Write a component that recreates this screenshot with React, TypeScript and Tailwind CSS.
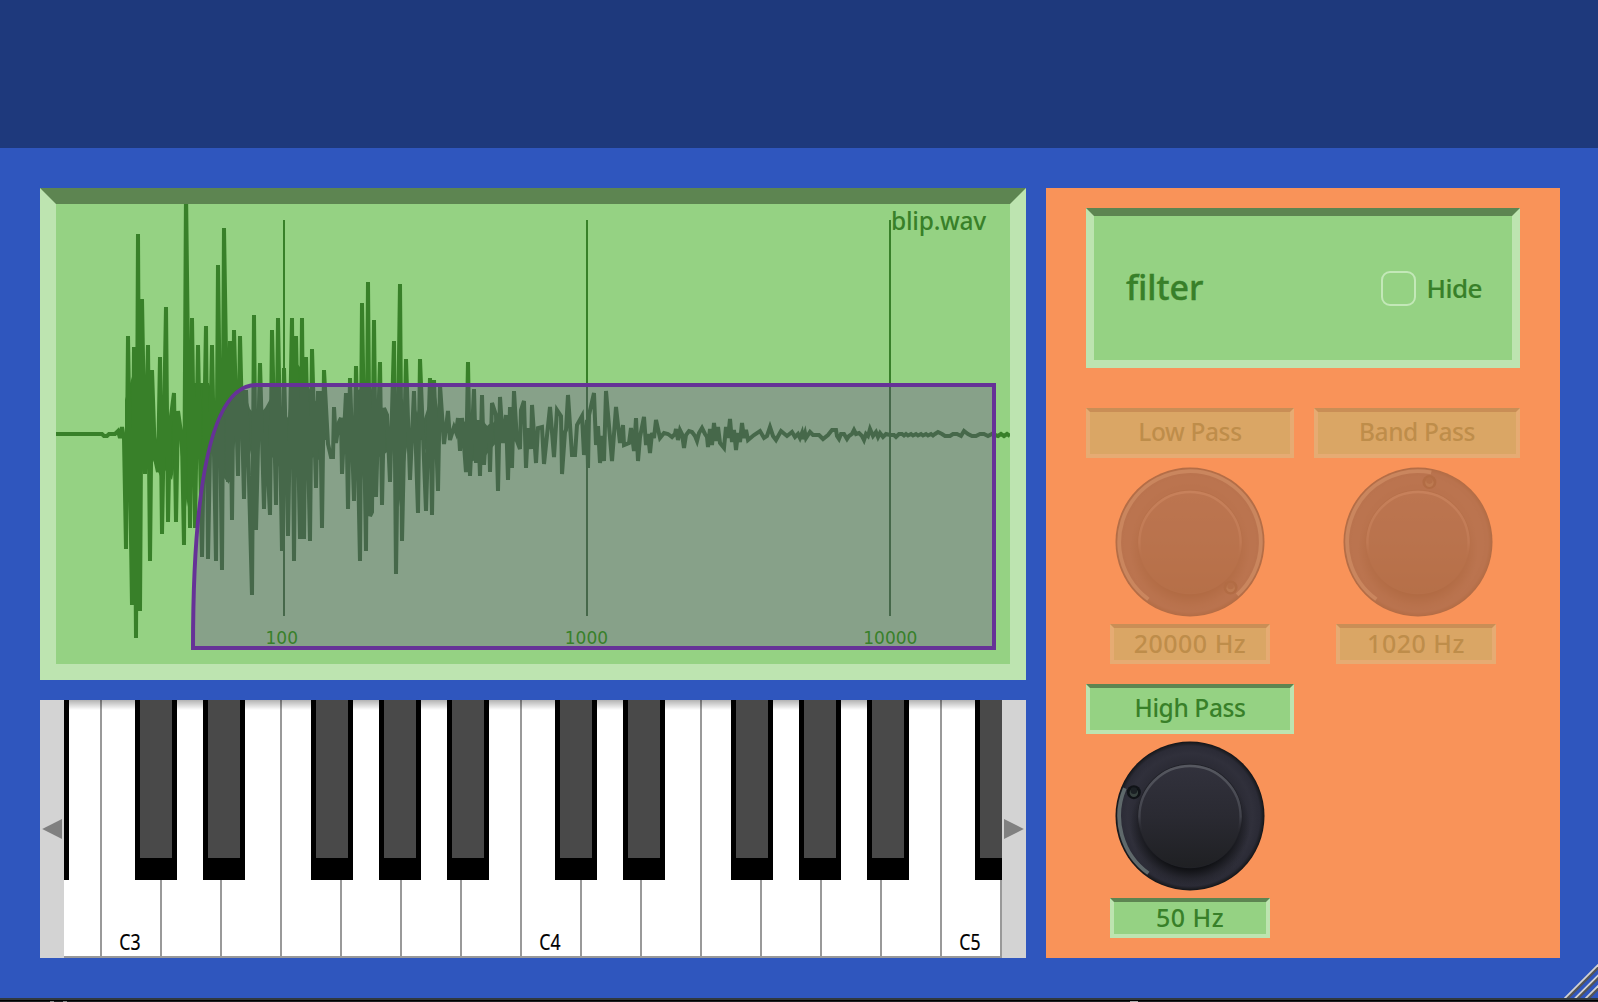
import type { ReactNode } from "react";

const WAVE =
  "56,434 102,434 104,436 107,436 109,434 115,434 118,431 120,438 122,427 124,439 126,549 128,336 132,605 134,347 136,638 138,234 140,611 142,299 145,474 148,345 150,561 152,370 155,458 158,472 160,357 162,534 166,307 168,522 170,424 174,393 176,522 178,411 182,440 184,545 186,190 190,528 192,318 195,528 198,345 202,557 206,326 208,559 212,345 216,561 218,265 222,570 224,228 228,482 230,341 232,520 234,330 238,476 240,336 244,499 246,390 248,443 252,595 254,315 256,530 260,363 264,509 266,430 270,515 272,330 276,505 278,318 282,551 284,368 288,536 292,318 294,561 296,336 300,539 302,318 304,539 306,357 310,541 312,349 316,488 318,393 320,393 322,528 324,370 328,444 331,457 333,457 334,407 336,443 339,422 341,418 342,474 346,393 348,509 350,378 354,501 356,366 360,561 362,303 366,551 368,282 370,516 372,512 374,320 376,497 380,362 382,505 384,408 387,415 390,482 394,341 396,574 400,284 402,541 406,359 410,480 414,391 418,513 420,359 426,511 430,378 432,515 434,380 438,491 440,385 444,444 448,411 450,440 454,427 456,432 458,418 460,451 462,418 466,472 468,362 470,476 474,389 476,463 478,420 480,476 482,395 484,465 486,430 489,427 490,472 492,403 496,415 498,491 500,397 503,443 506,415 508,480 510,407 512,468 514,391 517,441 520,449 521,410 524,401 526,468 528,428 531,449 532,405 536,463 538,428 542,427 544,464 550,407 554,457 557,410 561,416 562,474 565,432 566,430 568,395 572,455 575,455 577,425 582,416 584,455 587,420 588,468 589,415 594,393 596,445 598,426 600,463 602,436 604,461 606,391 612,461 616,407 620,443 623,425 624,445 629,443 631,428 634,451 636,418 638,461 640,437 644,417 646,445 648,434 650,453 652,433 654,438 656,420 660,438 664,433 668,434 672,437 675,434 676,429 678,440 680,430 682,434 684,448 686,435 689,431 692,432 695,436 697,441 699,433 702,428 705,434 707,437 708,447 710,429 712,445 714,423 716,441 718,427 720,443 724,448 726,427 728,438 730,419 732,442 734,430 736,450 738,433 740,442 742,423 744,438 746,430 748,440 754,435 760,431 764,438 767,436 770,427 773,436 776,440 781,431 787,436 792,432 795,437 798,434 800,438 802,433 803,439 805,433 806,438 810,432 813,435 819,435 823,439 828,435 832,430 836,430 837,436 839,439 841,434 844,434 847,439 849,436 852,434 854,430 856,434 859,433 862,436 864,440 866,434 868,436 870,429 873,436 876,432 878,437 880,433 883,437 886,434 890,435 894,435 896,437 899,434 902,434 904,435.5 906,434 908,435.5 911,434 913,435.5 916,434 918,435.5 921,434 923,435.5 926,434 928,435.5 931,434 933,435.5 935,434 938,432 942,434 945,436 950,436 953,434 957,434 961,436 964,431 968,434 972,436 976,436 980,434 984,434 988,436 992,434 998,436 1001,434 1004,436 1007,434 1010,436";

// Solid middle of the waveform, where neighbouring peaks merge into one mass.
const CORE = [
  "125,400 131,380 137,360 140,380 146,397 151,420 157,440 163,415 169,425 172,415 180,432 184,430 189,387 194,383 202,383 209,383 215,402 222,363 228,387 232,370 238,383 244,390 250,409 257,417 265,408 275,390 282,408 288,418 294,360 300,367 304,370 309,387 314,400 322,405 327,440 327,440 325,440 319,460 313,457 307,467 302,520 297,453 291,453 285,480 279,467 273,457 267,463 260,432 254,470 248,440 244,436 240,433 235,443 229,484 224,478 219,467 211,453 204,490 199,453 192,480 187,507 179,440 172,480 165,470 160,476 153,460 147,440 142,474 136,600 131,590 128,473 125,460",
  "340,421 347,412 354,416 358,390 365,387 371,387 377,405 382,415 388,430 389,450 392,440 397,390 403,400 410,430 417,410 422,425 430,400 436,397 441,425 441,440 435,450 429,460 422,440 414,440 407,447 399,507 392,447 386,453 379,457 376,480 371,512 363,480 356,440 351,452 345,437 340,437",
  "458,424 464,422 471,416 477,420 484,422 489,428 497,418 505,420 512,416 516,428 516,440 508,448 503,434 497,442 490,450 484,458 476,460 470,462 464,444 458,442",
];

const FILTER_CURVE = "M193 648 Q193 385 256 385 H994 V648 Z";

const TICKS = [
  { x: 284, label: "100", start: 265.5 },
  { x: 587, label: "1000", start: 564.8 },
  { x: 890, label: "10000", start: 863.3 },
];

function WavePanel() {
  return (
    <div className="relative h-[492px] border-16 border-[#bde4b0] border-t-[#5d8551] bg-[#95d283]">
      <svg className="block h-[460px] w-[954px]" viewBox="56 204 954 460">
        {CORE.map((points) => (
          <polygon key={points} points={points} fill="#388029" />
        ))}
        <polyline
          points={WAVE}
          fill="none"
          stroke="#388029"
          strokeWidth="4"
          strokeLinejoin="miter"
          strokeMiterlimit="4"
        />
        {TICKS.map((t) => (
          <line key={t.x} x1={t.x} x2={t.x} y1="220" y2="616" stroke="#388029" strokeWidth="2" />
        ))}
        <path d={FILTER_CURVE} fill="#663399" fillOpacity="0.3" />
        <path d={FILTER_CURVE} fill="none" stroke="#663297" strokeWidth="4" />
        {TICKS.map((t) => (
          <text
            key={t.x}
            x={t.start}
            y="644"
            fill="#388029"
            className="font-['DejaVu_Sans',sans-serif] text-[17px]"
          >
            {t.label}
          </text>
        ))}
      </svg>
      <span className="absolute top-0 right-6 font-['Noto_Sans',sans-serif] text-[24.5px] leading-[33px] font-medium tracking-[-0.25px] text-[#388029]">
        blip.wav
      </span>
    </div>
  );
}

const WHITE_KEYS = ["C3", "", "", "", "", "", "", "C4", "", "", "", "", "", "", "C5"];
const BLACK_OFFSETS = [34.8, 103.2, 210.6, 279, 347.4];
const BLACK_KEYS = [-1, 0, 1, 2]
  .flatMap((octave) => BLACK_OFFSETS.map((o) => 35.9 + octave * 420 + o))
  .filter((x) => x > -42 && x < 938);

function Keyboard() {
  return (
    <div className="flex h-[258px] bg-white">
      <div className="flex w-6 items-center justify-center bg-[#d3d3d3]">
        <svg className="size-5" viewBox="0 0 20 20">
          <path d="M0.2 10 L20 0 V20 Z" fill="#808080" />
        </svg>
      </div>
      <div className="relative flex w-[938px] overflow-hidden">
        <div className="w-9 shrink-0 border-b-2 border-[#999]" />
        {WHITE_KEYS.map((label, i) => (
          <div
            key={i}
            className="flex w-15 shrink-0 items-end justify-center border-b-2 border-l-2 border-[#999] pr-0.5"
          >
            <span className="scale-x-[0.82] font-['Noto_Sans',sans-serif] text-[21.5px] leading-7 text-black [-webkit-text-stroke:0.2px]">
              {label}
            </span>
          </div>
        ))}
        <div className="w-0.5 shrink-0 bg-[#999]" />
        <div className="absolute inset-x-0 top-0 h-2.5 bg-linear-to-b from-black/30 to-transparent" />
        {BLACK_KEYS.map((x) => (
          <div
            key={x}
            className="absolute top-0 h-[180px] w-[42px] bg-black px-[5px] pb-[22px]"
            style={{ left: x }}
          >
            <div className="h-full bg-[#494949]" />
          </div>
        ))}
      </div>
      <div className="flex w-6 items-center justify-center bg-[#d3d3d3]">
        <svg className="size-5" viewBox="0 0 20 20">
          <path d="M19.8 10 L0 0 V20 Z" fill="#808080" />
        </svg>
      </div>
    </div>
  );
}

/** Point on a circle around the origin, angle in degrees clockwise from the top. */
function polar(r: number, deg: number) {
  const a = (deg * Math.PI) / 180;
  return { x: r * Math.sin(a), y: -r * Math.cos(a) };
}

const ARC_START = -144;

function Knob({ id, angle }: { id: string; angle: number }) {
  const from = polar(70.8, ARC_START);
  const to = polar(70.8, angle);
  const dot = polar(61, angle);
  const large = angle - ARC_START > 180 ? 1 : 0;
  return (
    <svg className="block size-[150px]" viewBox="-75 -75 150 150">
      <defs>
        <radialGradient id={`${id}-ring`} gradientUnits="userSpaceOnUse" cx="0" cy="0" r="74.5">
          <stop offset="0.7" stopColor="#2b2b35" />
          <stop offset="0.84" stopColor="#30303b" />
          <stop offset="0.94" stopColor="#2b2b36" />
          <stop offset="0.98" stopColor="#1c1d22" />
          <stop offset="1" stopColor="#111216" />
        </radialGradient>
        <radialGradient id={`${id}-shade`} gradientUnits="userSpaceOnUse" cx="0" cy="10" r="60">
          <stop offset="0.72" stopColor="#0f1013" stopOpacity="0.95" />
          <stop offset="0.84" stopColor="#141519" stopOpacity="0.55" />
          <stop offset="1" stopColor="#18191e" stopOpacity="0" />
        </radialGradient>
        <linearGradient id={`${id}-cap`} x1="0" x2="0" y1="0" y2="1">
          <stop offset="0" stopColor="#32323d" />
          <stop offset="0.5" stopColor="#2a2a32" />
          <stop offset="1" stopColor="#1f2023" />
        </linearGradient>
        <linearGradient id={`${id}-rim`} x1="0" x2="0" y1="0" y2="1">
          <stop offset="0" stopColor="#565860" />
          <stop offset="0.5" stopColor="#41424b" />
          <stop offset="0.66" stopColor="#2a2a32" stopOpacity="0" />
        </linearGradient>
      </defs>
      <circle r="74.5" fill={`url(#${id}-ring)`} />
      <circle cy="10" r="60" fill={`url(#${id}-shade)`} />
      <circle cy="0" r="52.3" fill="#202127" />
      <circle cy="0" r="51.5" fill={`url(#${id}-cap)`} />
      <circle cy="0.6" r="50.6" fill="none" stroke={`url(#${id}-rim)`} strokeWidth="2.4" />
      <path
        d={`M${from.x} ${from.y} A70.8 70.8 0 ${large} 1 ${to.x} ${to.y}`}
        fill="none"
        stroke="#5f696b"
        strokeWidth="3.8"
      />
      <circle cx={dot.x} cy={dot.y} r="7" fill="#101317" />
      <circle cx={dot.x} cy={dot.y + 0.6} r="4.2" fill="#37423f" />
      <circle cx={dot.x} cy={dot.y - 1.5} r="3.3" fill="#1b2024" />
    </svg>
  );
}

function Plate({ className, children }: { className: string; children: ReactNode }) {
  return (
    <div
      className={`flex items-center justify-center border-4 border-[#bde4b0] border-t-[#5d8551] bg-[#95d283] pb-0.5 font-['Noto_Sans',sans-serif] leading-none font-medium text-[#388029] ${className}`}
    >
      {children}
    </div>
  );
}

function FilterControl({
  id,
  title,
  value,
  angle,
  knobClass,
  valueClass,
}: {
  id: string;
  title: string;
  value: string;
  angle: number;
  knobClass: string;
  valueClass: string;
}) {
  return (
    <>
      <Plate className="h-[50px] w-full text-[24.5px] tracking-[-0.4px]">{title}</Plate>
      <div className={knobClass}>
        <Knob id={id} angle={angle} />
      </div>
      <Plate className={`h-10 w-40 text-[25px] tracking-[0.5px] ${valueClass}`}>{value}</Plate>
    </>
  );
}

function FilterPanel() {
  return (
    <div className="h-[770px] w-[514px] shrink-0 bg-[#f99359] px-10 pt-5">
      <div className="flex h-40 items-center justify-between border-8 border-[#bde4b0] border-t-[#5d8551] bg-[#95d283] pr-[30px] pl-8 font-['Noto_Sans',sans-serif] font-medium text-[#388029]">
        <span className="pb-0.5 text-[34px] leading-none [-webkit-text-stroke:0.4px]">filter</span>
        <span className="flex items-center gap-[10px]">
          <span className="size-[35px] rounded-[9px] border-2 border-[#c3e8b8]" />
          <span className="text-[26px] leading-none tracking-[-0.5px] [-webkit-text-stroke:0.2px]">Hide</span>
        </span>
      </div>
      <div className="mt-10 flex justify-between">
        <div className="flex h-64 w-52 flex-col opacity-30">
          <FilterControl id="low" title="Low Pass" value="20000 Hz" angle={138.3} knobClass="mt-[9px] ml-[29px]" valueClass="mt-[7px] ml-6" />
        </div>
        <div className="flex h-64 w-[206px] flex-col opacity-30">
          <FilterControl id="band" title="Band Pass" value="1020 Hz" angle={10.8} knobClass="mt-[9px] ml-[29px]" valueClass="mt-[7px] ml-[22px]" />
        </div>
      </div>
      <div className="mt-5 flex w-52 flex-col">
        <FilterControl id="high" title="High Pass" value="50 Hz" angle={-67} knobClass="mt-[7px] ml-[29px]" valueClass="mt-[7px] ml-6" />
      </div>
    </div>
  );
}

function ResizeCorner() {
  return (
    <svg className="absolute right-0 bottom-0 h-[34px] w-[34px]" viewBox="-2 -2 34 34">
      {[0, 10.4, 21].map((o) => (
        <g key={o}>
          <path d={`M${o - 0.5} 34 L34 ${o - 0.5}`} stroke="#555" strokeWidth="2.8" />
          <path d={`M${o - 3} 34 L34 ${o - 3}`} stroke="#d3d3d3" strokeWidth="1.8" />
        </g>
      ))}
    </svg>
  );
}

export default function App() {
  return (
    <div className="flex h-[1002px] w-[1598px] flex-col overflow-hidden bg-black">
      <div className="h-[148px] bg-[#1e397c]" />
      <div className="relative flex h-[850px] gap-5 bg-[#2f56be] pt-10 pl-10">
        <div className="flex w-[986px] shrink-0 flex-col gap-5">
          <WavePanel />
          <Keyboard />
        </div>
        <FilterPanel />
        <ResizeCorner />
      </div>
      <div className="h-0.5 bg-[#31393f]" />
      <div className="mt-px flex h-px bg-[#1c1e20]">
        <div className="ml-[50px] h-px w-1 bg-[#888]" />
        <div className="ml-[9px] h-px w-1 bg-[#888]" />
        <div className="ml-[1063px] h-px w-2 bg-[#aaa]" />
      </div>
    </div>
  );
}
